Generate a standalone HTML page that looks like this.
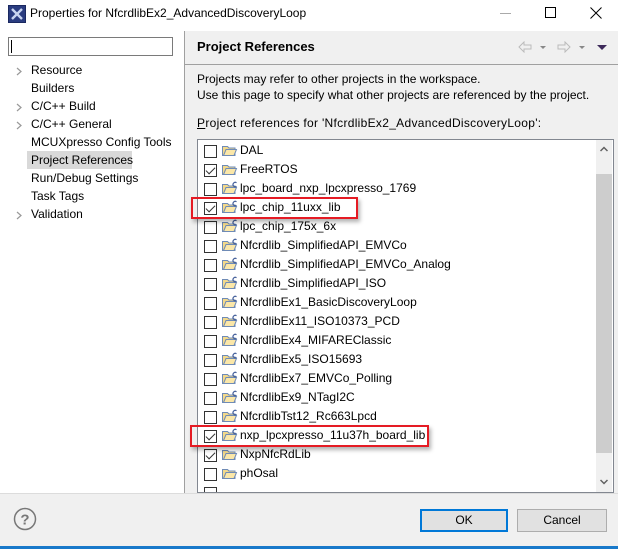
<!DOCTYPE html>
<html><head><meta charset="utf-8"><style>
*{margin:0;padding:0;box-sizing:border-box}
body{width:618px;height:549px;background:#fff;font-family:"Segoe UI","Liberation Sans",sans-serif;font-size:12px;color:#000;position:relative;overflow:hidden}
.a{position:absolute;white-space:nowrap}
.cb{position:absolute;width:13px;height:13px;border:1px solid #333;background:#fff}
.cb.c::after{content:"";position:absolute;left:3px;top:0px;width:4px;height:8px;border:solid #333;border-width:0 1.5px 1.5px 0;transform:rotate(45deg)}
.red{position:absolute;border:2px solid #e51b24;box-shadow:2px 3px 4px rgba(0,0,0,.3)}
.chev{position:absolute;left:16px}
</style></head><body>
<svg class="a" style="left:8px;top:5px" width="18" height="18"><rect x="0.5" y="0.5" width="17" height="17" fill="#2a3c80" stroke="#1a2860"/><path d="M4 4L14 14M14 4L4 14" stroke="#c8d4f0" stroke-width="2.4"/></svg>
<div class="a" style="left:30px;top:6px;font-size:12px">Properties for NfcrdlibEx2_AdvancedDiscoveryLoop</div>
<div class="a" style="left:500px;top:13px;width:11px;height:1px;background:#aaa"></div>
<div class="a" style="left:545px;top:7px;width:11px;height:11px;border:1px solid #000"></div>
<svg class="a" style="left:590px;top:7px" width="12" height="12"><path d="M0.5 0.5L11.5 11.5M11.5 0.5L0.5 11.5" stroke="#000" stroke-width="1"/></svg>
<div class="a" style="left:8px;top:37px;width:165px;height:19px;border:1px solid #7a7a7a"></div>
<div class="a" style="left:11px;top:40px;width:1px;height:13px;background:#000"></div>
<div class="a" style="left:184px;top:31px;width:1px;height:462px;background:#a0a0a0"></div>
<div class="a" style="left:27px;top:151px;width:105px;height:18px;background:#d9d9d9"></div>
<svg class="chev" style="top:67px" width="6" height="9"><path d="M1 1L5 4.5L1 8" fill="none" stroke="#999" stroke-width="1.2"/></svg>
<svg class="chev" style="top:103px" width="6" height="9"><path d="M1 1L5 4.5L1 8" fill="none" stroke="#999" stroke-width="1.2"/></svg>
<svg class="chev" style="top:121px" width="6" height="9"><path d="M1 1L5 4.5L1 8" fill="none" stroke="#999" stroke-width="1.2"/></svg>
<svg class="chev" style="top:211px" width="6" height="9"><path d="M1 1L5 4.5L1 8" fill="none" stroke="#999" stroke-width="1.2"/></svg>
<div class="a" style="left:31px;top:61px;line-height:18px">Resource<br>Builders<br>C/C++ Build<br>C/C++ General<br>MCUXpresso Config Tools<br>Project References<br>Run/Debug Settings<br>Task Tags<br>Validation</div>
<div class="a" style="left:185px;top:31px;width:433px;height:462px;background:#f0f0f0"></div>
<div class="a" style="left:185px;top:64px;width:433px;height:1px;background:#a0a0a0"></div>
<div class="a" style="left:197px;top:39px;font-weight:bold;font-size:13px">Project References</div>
<svg class="a" style="left:518px;top:41px" width="90" height="12"><path d="M1 6L6 1V4H13V8H6V11Z" fill="none" stroke="#bbb"/><path d="M22 5h6l-3 3z" fill="#888"/><path d="M52 6L47 1V4H40V8H47V11Z" fill="none" stroke="#bbb"/><path d="M61 5h6l-3 3z" fill="#888"/><path d="M79 4h10l-5 5z" fill="#3d2a5a"/></svg>
<div class="a" style="left:197px;top:71px;line-height:16px">Projects may refer to other projects in the workspace.<br>Use this page to specify what other projects are referenced by the project.</div>
<div class="a" style="left:197px;top:116px;letter-spacing:0.3px"><u>P</u>roject references for 'NfcrdlibEx2_AdvancedDiscoveryLoop':</div>
<div class="a" style="left:197px;top:139px;width:417px;height:354px;background:#fff;border:1px solid #828790;overflow:hidden"></div>
<div class="a" style="left:596px;top:140px;width:16px;height:352px;background:#f0f0f0"></div>
<div class="a" style="left:596px;top:174px;width:16px;height:279px;background:#cdcdcd"></div>
<svg class="a" style="left:600px;top:146px" width="8" height="6"><path d="M0.5 5L4 1.5L7.5 5" fill="none" stroke="#606060" stroke-width="1.5"/></svg>
<svg class="a" style="left:600px;top:479px" width="8" height="6"><path d="M0.5 1L4 4.5L7.5 1" fill="none" stroke="#606060" stroke-width="1.5"/></svg>
<div id="rows"></div>
<div class="red" style="left:191px;top:197px;width:167px;height:22px"></div>
<div class="red" style="left:190px;top:425px;width:239px;height:22px"></div>
<div class="a" style="left:0;top:493px;width:618px;height:56px;background:#f0f0f0;border-top:1px solid #dcdcdc"></div>
<svg class="a" style="left:13px;top:507px" width="24" height="24"><circle cx="12" cy="12" r="10.5" fill="none" stroke="#777" stroke-width="1.5"/><text x="12" y="17.5" text-anchor="middle" font-family="Liberation Sans" font-weight="bold" font-size="15" fill="#777">?</text></svg>
<div class="a" style="left:420px;top:509px;width:88px;height:23px;border:2px solid #0078d7;background:#e1e1e1;text-align:center;line-height:19px">OK</div>
<div class="a" style="left:517px;top:509px;width:90px;height:23px;border:1px solid #adadad;background:#e1e1e1;text-align:center;line-height:21px">Cancel</div>
<div class="a" style="left:0;top:546px;width:618px;height:3px;background:#1979ca"></div>
<script>
var items=[["DAL",0,0],["FreeRTOS",1,0],["lpc_board_nxp_lpcxpresso_1769",0,1],["lpc_chip_11uxx_lib",1,1],["lpc_chip_175x_6x",0,1],["Nfcrdlib_SimplifiedAPI_EMVCo",0,1],["Nfcrdlib_SimplifiedAPI_EMVCo_Analog",0,1],["Nfcrdlib_SimplifiedAPI_ISO",0,1],["NfcrdlibEx1_BasicDiscoveryLoop",0,1],["NfcrdlibEx11_ISO10373_PCD",0,1],["NfcrdlibEx4_MIFAREClassic",0,1],["NfcrdlibEx5_ISO15693",0,1],["NfcrdlibEx7_EMVCo_Polling",0,1],["NfcrdlibEx9_NTagI2C",0,1],["NfcrdlibTst12_Rc663Lpcd",0,1],["nxp_lpcxpresso_11u37h_board_lib",1,1],["NxpNfcRdLib",1,0],["phOsal",0,0],["",0,0]];
var h="";
items.forEach(function(it,i){var y=145+i*19;
if(y+2>492)return;
var clip=y+13>492?"clip-path:inset(0 0 "+(y+13-492)+"px 0);":"";
h+='<div class="cb'+(it[1]?' c':'')+'" style="left:204px;top:'+y+'px;'+clip+'"></div>';
if(it[0]){h+='<svg class="a" style="left:221px;top:'+(y-2)+'px" width="17" height="15"><path d="M1.5 3.5h5l1.5 1.5h6v7.5h-12.5z" fill="#f3d98a" stroke="#6f8bb6"/><path d="M2.5 12.5l2.5-6h10.5l-2.5 6z" fill="#fbe7a8" stroke="#6f8bb6"/>'+(it[2]?'<path d="M15.5 1.8a2.2 2.2 0 1 0 0 3.6" fill="none" stroke="#445f9a" stroke-width="1.2"/>':'')+'</svg>';
h+='<div class="a" style="left:240px;top:'+(y-2)+'px">'+it[0]+'</div>';}
});
document.getElementById("rows").innerHTML=h;
</script>
</body></html>
